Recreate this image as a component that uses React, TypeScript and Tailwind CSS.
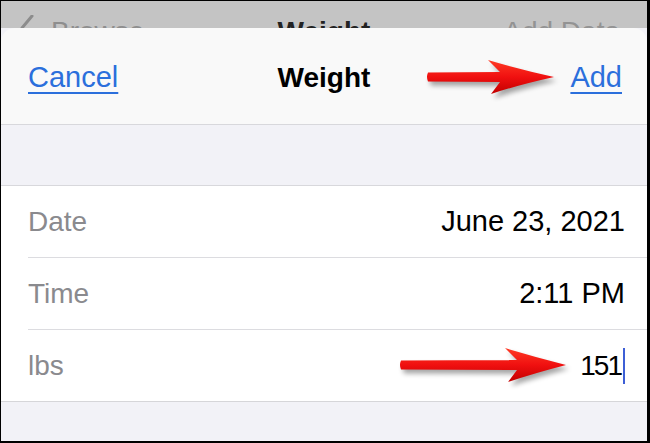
import React from "react";

const font = { fontFamily: '"Liberation Sans", Arial, sans-serif' };

// red annotation arrow, drawn around a centre line at y=17
function Arrow({ width, head }: { width: number; head: number }) {
  const d = `M1 12.5 L${head + 12} 12 L${head} 0 Q${head + 30} 9 ${width} 17 Q${head + 30} 25 ${head + 3} 34 L${head + 12} 22 L1 21.5 Q-1 17 1 12.5 Z`;
  const id = `g${width}`;
  return (
    <svg width={width} height={34} viewBox={`0 0 ${width} 34`} className="overflow-visible">
      <defs>
        <linearGradient id={id} x1="0" y1="0" x2="0" y2="1">
          <stop offset="0" stopColor="#ff3a24" />
          <stop offset="0.5" stopColor="#f01010" />
          <stop offset="1" stopColor="#c20000" />
        </linearGradient>
        <filter id={`s${id}`} x="-10%" y="-40%" width="130%" height="200%">
          <feGaussianBlur stdDeviation="2.5" />
        </filter>
      </defs>
      <path d={d} fill="#000" opacity="0.35" transform="translate(3 4)" filter={`url(#s${id})`} />
      <path d={d} fill={`url(#${id})`} />
    </svg>
  );
}

function Row({ label, value, last, children }: { label: string; value: string; last?: boolean; children?: React.ReactNode }) {
  return (
    <div className="relative bg-white">
      <div className="flex h-[71px] items-center justify-between pl-[27px] pr-[22px]">
        <span className="text-[28px] text-[#8a8a8e]">{label}</span>
        {last ? (
          <span className="flex items-center text-[28px] text-black">
            <span className="tracking-[-2px]">{value}</span>
            <span className="ml-[2px] h-[36px] w-[2px] bg-[#3d5fd6]" />
          </span>
        ) : (
          <span className="text-[29px] text-black">{value}</span>
        )}
      </div>
      <div className={last ? "h-px bg-[#d6d6d9]" : "ml-[27px] h-px bg-[#dcdce0]"} />
      {children}
    </div>
  );
}

export default function App() {
  return (
    <div className="flex h-[443px] w-[650px] flex-col overflow-hidden border-t border-l border-r-[3px] border-b-2 border-black bg-[#f2f2f7]" style={font}>
      {/* dimmed screen behind the sheet */}
      <div className="grid h-[27px] shrink-0 grid-cols-[1fr_auto_1fr] overflow-hidden bg-[#c4c4c4] pt-[15px] text-[28px] leading-none">
        <div className="flex items-start gap-[17px] pl-[19px]">
          <svg width="14" height="26" viewBox="0 0 14 26" className="mt-[-1px]">
            <polyline points="12,1 2,13 12,25" fill="none" stroke="#8c8c8c" strokeWidth="3" strokeLinecap="round" strokeLinejoin="round" />
          </svg>
          <span className="mt-[2px] text-[#8e8e8e]">Browse</span>
        </div>
        <span className="mt-[2px] font-bold text-[#222]">Weight</span>
        <span className="mt-[2px] justify-self-end pr-[27px] text-[#939393]">Add Data</span>
      </div>

      {/* sheet */}
      <div className="flex flex-1 flex-col overflow-hidden rounded-t-[14px] bg-[#f2f2f7]">
        <div className="relative grid h-[97px] shrink-0 grid-cols-[1fr_auto_1fr] items-center border-b border-[#d8d8dc] bg-[#f9f9f9] pt-[3px] text-[29px]">
          <span className="pl-[27px] text-[#2b6fdc] underline decoration-2 underline-offset-[5px]">Cancel</span>
          <span className="text-[28px] font-bold text-black">Weight</span>
          <span className="justify-self-end pr-[25px] text-[#2b6fdc] underline decoration-2 underline-offset-[5px]">Add</span>
          <div className="absolute left-[426px] top-[32px]">
            <Arrow width={127} head={61} />
          </div>
        </div>

        <div className="h-[60px] shrink-0" />

        <div className="shrink-0 border-t border-[#d8d8dc]">
          <Row label="Date" value="June 23, 2021" />
          <Row label="Time" value="2:11 PM" />
          <Row label="lbs" value="151" last>
            <div className="absolute left-[399px] top-[18px]">
              <Arrow width={166} head={105} />
            </div>
          </Row>
        </div>
      </div>
    </div>
  );
}
